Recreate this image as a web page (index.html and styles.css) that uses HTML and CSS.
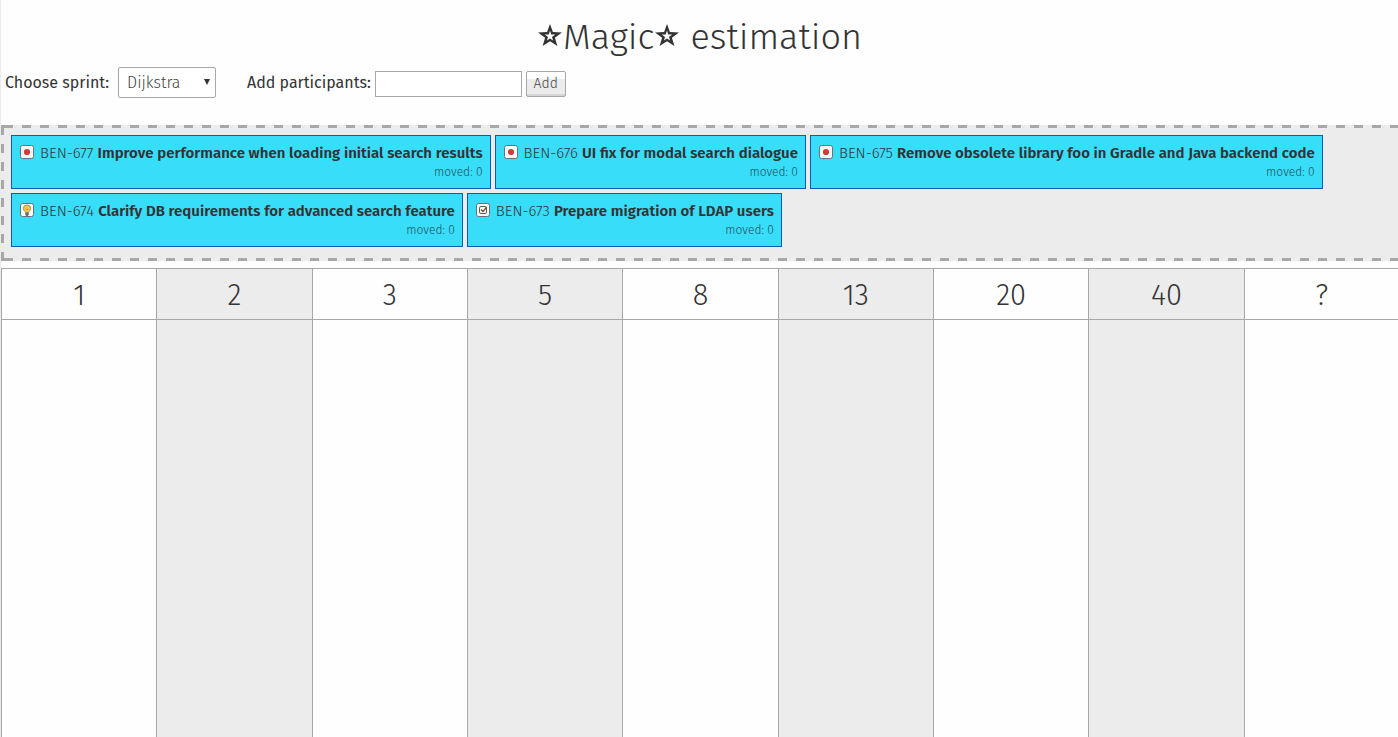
FILE: index.html
```html
<!DOCTYPE html>
<html lang="en">
<head>
<meta charset="utf-8">
<title>Magic estimation</title>
<link rel="stylesheet" href="styles.css">
</head>
<body>
<svg width="0" height="0" class="sprite" aria-hidden="true">
  <symbol id="star" viewBox="0 0 24 22">
    <path fill="#333" fill-rule="evenodd" d="M12 0L14.900 8.100 24 8.400 16.900 13.700 19.400 22 12 17.200 4.600 22 7.100 13.700 0 8.400 9.100 8.100zM12 6.500L10.800 10.500 6.800 10.600 10 12.900 8.900 16.600 12 14.400 15.100 16.600 14 12.900 17.200 10.600 13.200 10.500z"/>
  </symbol>
  <symbol id="bug" viewBox="0 0 14 14">
    <rect x=".5" y=".5" width="13" height="13" rx="2" fill="#f4fbfc" stroke="#6c7071"/>
    <circle cx="7" cy="7" r="3.1" fill="#d8392f"/>
  </symbol>
  <symbol id="idea" viewBox="0 0 14 14">
    <rect x=".5" y=".5" width="13" height="13" rx="2" fill="#f4fbfc" stroke="#6c7071"/>
    <path d="M5.5 9.5C5.3 8.3 3.3 7.500 3.300 5.500a3.700 3.500 0 0 1 7.400 0C10.700 7.500 8.700 8.300 8.500 9.500z" fill="#f9c846" stroke="#86836f" stroke-width=".8"/>
    <path d="M5.500 5.800l1 .8.700-.6.800.6.700-.8" fill="none" stroke="#b9782d" stroke-width=".7"/>
    <path d="M5.300 9.500h3.400v2L7.800 13H6.200l-.9-1.500z" fill="#696d6e"/>
  </symbol>
  <symbol id="task" viewBox="0 0 14 14">
    <rect x=".5" y=".5" width="13" height="13" rx="2" fill="#f4fbfc" stroke="#6c7071"/>
    <rect x="3.500" y="3.500" width="7" height="7" rx="1.500" fill="none" stroke="#6f5a48"/>
    <path d="M5 6.500l2 2 3.700-4.300" fill="none" stroke="#6f4a2c" stroke-width="1.300"/>
  </symbol>
</svg>
<main class="page">
  <h1 class="title"><svg class="star"><use href="#star"/></svg>Magic<svg class="star"><use href="#star"/></svg> estimation</h1>
  <form class="controls">
    <label class="label" for="sprint">Choose sprint:</label>
    <span class="select-wrap"><select class="select" id="sprint"><option>Dijkstra</option></select></span>
    <label class="label label-people" for="people">Add participants:</label>
    <input class="input" id="people" type="text">
    <button class="button" type="button">Add</button>
  </form>
  <section class="backlog">
    <article class="card">
      <div class="card-title"><svg class="icon"><use href="#bug"/></svg><span>BEN-677 <b>Improve performance when loading initial search results</b></span></div>
      <div class="moved">moved: 0</div>
    </article>
    <article class="card">
      <div class="card-title"><svg class="icon"><use href="#bug"/></svg><span>BEN-676 <b>UI fix for modal search dialogue</b></span></div>
      <div class="moved">moved: 0</div>
    </article>
    <article class="card">
      <div class="card-title"><svg class="icon"><use href="#bug"/></svg><span>BEN-675 <b>Remove obsolete library foo in Gradle and Java backend code</b></span></div>
      <div class="moved">moved: 0</div>
    </article>
    <article class="card">
      <div class="card-title"><svg class="icon"><use href="#idea"/></svg><span>BEN-674 <b>Clarify DB requirements for advanced search feature</b></span></div>
      <div class="moved">moved: 0</div>
    </article>
    <article class="card">
      <div class="card-title"><svg class="icon"><use href="#task"/></svg><span>BEN-673 <b>Prepare migration of LDAP users</b></span></div>
      <div class="moved">moved: 0</div>
    </article>
  </section>
  <div class="board">
    <table class="estimates">
      <thead><tr><th>1</th><th>2</th><th>3</th><th>5</th><th>8</th><th>13</th><th>20</th><th>40</th><th>?</th></tr></thead>
      <tbody><tr><td></td><td></td><td></td><td></td><td></td><td></td><td></td><td></td><td></td></tr></tbody>
    </table>
  </div>
</main>
</body>
</html>
```
FILE: styles.css
```css
* { box-sizing: border-box; }
body {
  margin: 0;
  background: #fefefe;
  color: #333;
  font-family: "Fira Sans", "Open Sans", "Noto Sans", sans-serif;
  font-size: 16px;
}
.sprite { position: absolute; }
.page {
  display: flex;
  flex-direction: column;
  height: 100vh;
  overflow: hidden;
  border-left: 1px solid #ebebeb;
}
.title {
  margin: 0;
  padding-top: 13px;
  font-size: 36px;
  font-weight: 300;
  line-height: 48px;
  text-align: center;
}
.star { width: 24px; height: 22px; margin: 0 1px 3px; }
.controls {
  display: flex;
  align-items: center;
  gap: 4px;
  height: 43px;
  padding-left: 4px;
}
.select-wrap { position: relative; margin-left: 5px; }
.select-wrap::after {
  content: "";
  position: absolute;
  top: 12px;
  right: 6px;
  border: solid transparent;
  border-width: 6px 3px 0;
  border-top-color: #333;
  pointer-events: none;
}
.select {
  appearance: none;
  display: block;
  width: 98px;
  height: 31px;
  padding: 0 8px;
  border: 1px solid #a8a8a8;
  border-radius: 2px;
  background: #fff;
  color: #444;
  font: 300 16px "Fira Sans", "Open Sans", sans-serif;
}
.label-people { margin-left: 27px; }
.input {
  width: 147px;
  height: 26px;
  margin-top: 2px;
  padding: 2px 4px;
  border: 1px solid #a8a8a8;
  background: #fff;
  font: inherit;
}
.button {
  width: 40px;
  height: 26px;
  margin-top: 2px;
  padding: 0 0 1px;
  border: 1px solid #a8a8a8;
  border-radius: 2px;
  background: linear-gradient(#fff 7px, #ececec 7px, #ececec 22px, #d6d6d6 22px);
  color: #444;
  font: 300 14px "Fira Sans", "Open Sans", sans-serif;
}
.backlog {
  display: flex;
  flex-wrap: wrap;
  align-content: flex-start;
  gap: 4px;
  margin-top: 21px;
  padding: 10px 10px 14px;
  background:
    linear-gradient(#a8a8a8, #a8a8a8) 0 0 / 4px 3px no-repeat,
    linear-gradient(#a8a8a8, #a8a8a8) 0 100% / 4px 3px no-repeat,
    linear-gradient(90deg, #a8a8a8 50%, transparent 50%) 3px 0 / 18px 3px repeat-x,
    linear-gradient(90deg, #a8a8a8 50%, transparent 50%) 3px 100% / 18px 3px repeat-x,
    linear-gradient(#a8a8a8 50%, transparent 50%) 0 1px / 3px 18px repeat-y,
    #ececec;
}
.card {
  height: 54px;
  padding: 7px 7px 0 8px;
  border: 1px solid #0d5bb5;
  background: #38ddfa;
  line-height: 20px;
}
.card-title {
  display: flex;
  gap: 6px;
  font-size: 15px;
  font-weight: 300;
}
.card-title b { font-weight: 600; }
.icon { width: 14px; height: 14px; margin-top: 2px; }
.moved {
  color: #22525e;
  font-size: 12px;
  font-weight: 300;
  line-height: 18px;
  text-align: right;
}
.board { flex: 1; min-height: 0; margin-top: 7px; overflow: hidden; }
.estimates {
  width: calc(100% + 2px);
  table-layout: fixed;
  border-collapse: collapse;
}
.estimates th, .estimates td { border: 1px solid #a8a8a8; }
.estimates th {
  height: 51px;
  padding: 4px 0 0;
  font-size: 29px;
  font-weight: 300;
  line-height: 40px;
}
.estimates td { height: 100vh; }
.estimates th:nth-child(even), .estimates td:nth-child(even) { background: #ececec; }
```
